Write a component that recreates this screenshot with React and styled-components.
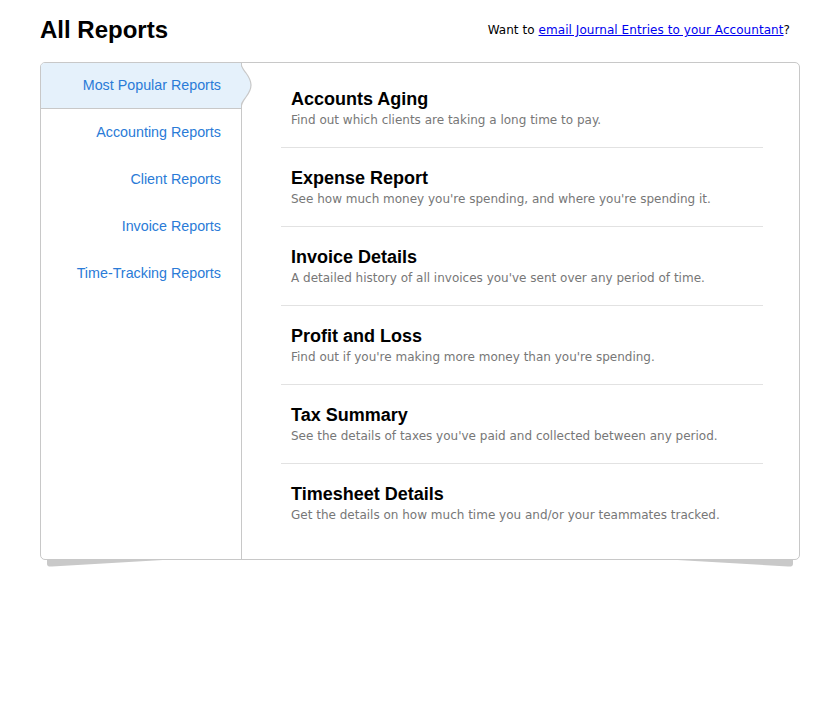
import React from "react";
import styled, { createGlobalStyle } from "styled-components";

const Global = createGlobalStyle`
  html, body { margin: 0; padding: 0; background: #fff; }
  body { font-family: "Liberation Sans", Arial, sans-serif; }
`;

const Page = styled.div`
  width: 760px;
  padding: 14px 40px 0 40px;
`;

const Header = styled.div`
  display: flex;
  justify-content: space-between;
  align-items: center;
  height: 32px;
  margin-bottom: 16px;
`;

const Title = styled.h1`
  margin: 0;
  font-family: "Liberation Sans", Arial, sans-serif;
  font-weight: bold;
  font-size: 24px;
  color: #000;
`;

const Note = styled.div`
  font-family: "DejaVu Sans", Verdana, sans-serif;
  font-size: 12px;
  letter-spacing: 0.06px;
  color: #000;
  margin-right: 10px;
  a { color: #0000ee; text-decoration: underline; }
`;

const PanelWrap = styled.div`
  display: flex;
  flex-direction: column;
`;

const LiftShadow = styled.svg`
  display: block;
  width: 760px;
  height: 9px;
  margin-top: -1px;
`;

const Panel = styled.div`
  position: relative;
  z-index: 1;
  display: flex;
  height: 496px;
  border: 1px solid #c8c8c8;
  border-radius: 5px;
  background: #fff;
`;

const Sidebar = styled.nav`
  width: 200px;
  border-right: 1px solid #c8c8c8;
  display: flex;
  flex-direction: column;
`;

const NavItem = styled.a`
  position: relative;
  display: block;
  text-align: right;
  padding-right: 20px;
  height: ${(p) => (p.$active ? "45px" : "47px")};
  line-height: ${(p) => (p.$active ? "45px" : "47px")};
  font-size: 14.3px;
  color: #2a7bd7;
  text-decoration: none;
  background: ${(p) => (p.$active ? "#e5f1fb" : "transparent")};
  border-bottom: ${(p) => (p.$active ? "1px solid #c8c8c8" : "none")};
  border-top-left-radius: ${(p) => (p.$active ? "4px" : "0")};
`;

const Bulge = styled.svg`
  position: absolute;
  top: 0;
  right: -12px;
  width: 12px;
  height: 46px;
  z-index: 2;
`;

const Content = styled.div`
  flex: 1;
  padding: 6px 36px 0 39px;
`;

const Report = styled.div`
  padding: 19px 10px 18px;
  border-bottom: ${(p) => (p.$last ? "none" : "1px solid #e2e2e2")};
`;

const ReportTitle = styled.div`
  font-family: "Liberation Sans", Arial, sans-serif;
  font-weight: bold;
  font-size: 18px;
  line-height: 23px;
  color: #000;
`;

const ReportDesc = styled.div`
  font-family: "DejaVu Sans", Verdana, sans-serif;
  font-size: 12px;
  line-height: 18px;
  color: #777;
`;

const navs = [
  "Most Popular Reports",
  "Accounting Reports",
  "Client Reports",
  "Invoice Reports",
  "Time-Tracking Reports",
];

const reports = [
  ["Accounts Aging", "Find out which clients are taking a long time to pay."],
  ["Expense Report", "See how much money you're spending, and where you're spending it."],
  ["Invoice Details", "A detailed history of all invoices you've sent over any period of time."],
  ["Profit and Loss", "Find out if you're making more money than you're spending."],
  ["Tax Summary", "See the details of taxes you've paid and collected between any period."],
  ["Timesheet Details", "Get the details on how much time you and/or your teammates tracked."],
];

export default function App() {
  return (
    <>
      <Global />
      <Page>
        <Header>
          <Title>All Reports</Title>
          <Note>
            Want to <a href="#">email Journal Entries to your Accountant</a>?
          </Note>
        </Header>
        <PanelWrap>
          <Panel>
            <Sidebar>
              {navs.map((n, i) => (
                <NavItem key={n} href="#" $active={i === 0}>
                  {n}
                  {i === 0 && (
                    <Bulge viewBox="0 0 12 46">
                      <path
                        d="M0 0 C0 4 2 6 5 10 C8 14 10 18 10 22 C10 26 8 30 5 34 C2 38 0 40 0 45 L-1 45 L-1 0 Z"
                        fill="#e5f1fb"
                      />
                      <path
                        d="M0 0 C0 4 2 6 5 10 C8 14 10 18 10 22 C10 26 8 30 5 34 C2 38 0 40 0 46"
                        fill="none"
                        stroke="#c8c8c8"
                        strokeWidth="1.2"
                      />
                    </Bulge>
                  )}
                </NavItem>
              ))}
            </Sidebar>
            <Content>
              {reports.map(([t, d], i) => (
                <Report key={t} $last={i === reports.length - 1}>
                  <ReportTitle>{t}</ReportTitle>
                  <ReportDesc>{d}</ReportDesc>
                </Report>
              ))}
            </Content>
          </Panel>
          <LiftShadow viewBox="0 0 760 9">
            <path d="M7 0 L140 0 L12 7.5 Q7 8 7 5 Z" fill="#c9c9c9" />
            <path d="M753 0 L620 0 L748 7.5 Q753 8 753 5 Z" fill="#c9c9c9" />
          </LiftShadow>
        </PanelWrap>
      </Page>
    </>
  );
}
